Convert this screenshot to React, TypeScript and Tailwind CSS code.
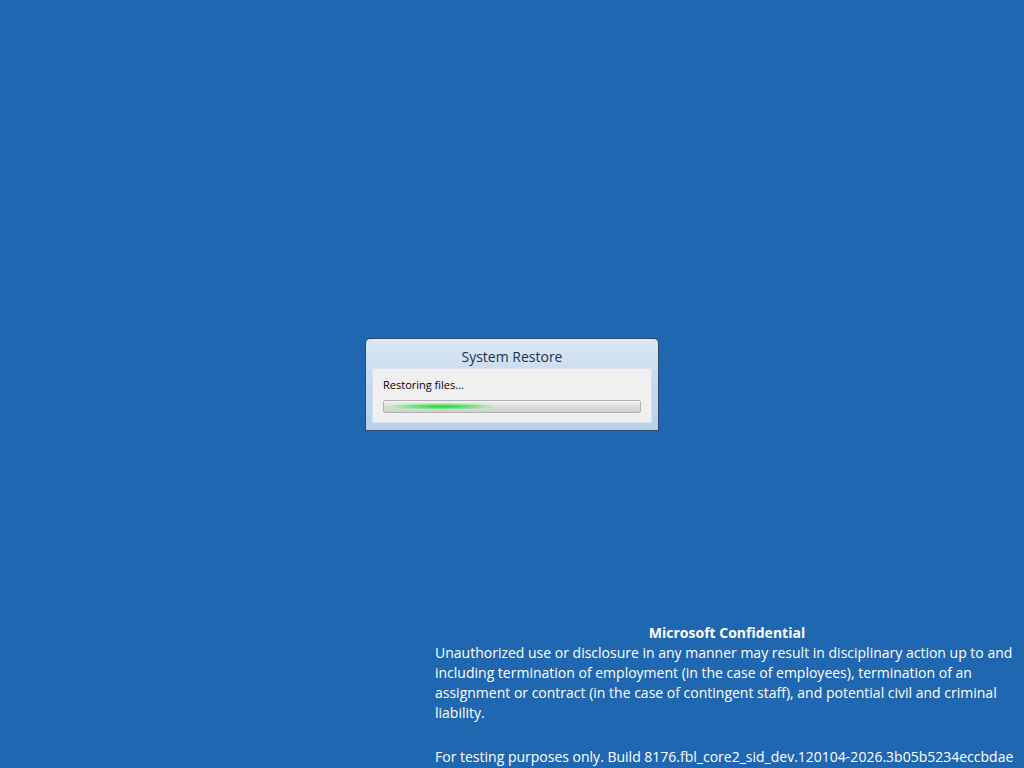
export default function App() {
  return (
    <div
      className="flex h-[768px] w-[1024px] flex-col overflow-hidden bg-[#1f67b0] pt-[338px]"
      style={{ fontFamily: '"Segoe UI", "Open Sans", "Noto Sans", sans-serif' }}
    >
      {/* dialog */}
      <div className="flex w-[294px] flex-col self-center rounded-t-[5px] border border-[#34496a] bg-gradient-to-b from-[#dbe8f5] via-[#c4d8ee] to-[#b9d1ea] px-[6px] pb-[7px]">
        <div className="flex h-[29px] items-center justify-center pt-[5px] text-[14px] text-[#1e3150]">
          System Restore
        </div>
        <div className="flex h-[55px] flex-col gap-[8px] border border-[#d6e2ef] bg-[#f0f0f0] px-[10px] pt-[9px]">
          <div className="text-[11px] leading-[14px] text-black">Restoring files...</div>
          <div className="flex h-[13px] items-center overflow-hidden rounded-[2px] border border-[#b2b2b2] bg-gradient-to-b from-[#f3f3f3] via-[#dcdcdc] to-[#d0d0d0] px-[2px]">
            <div className="h-[7px] w-[112px] rounded-full bg-[radial-gradient(ellipse_at_center,#22d63a_0%,#6fe07a_35%,rgba(200,240,200,0.4)_70%,transparent_100%)]" />
          </div>
        </div>
      </div>

      {/* confidential notice */}
      <div className="ml-[435px] mt-[192px] w-[584px] text-[14px] leading-[20px] text-white">
        <div className="text-center font-bold">Microsoft Confidential</div>
        <p>
          Unauthorized use or disclosure in any manner may result in disciplinary action up to and including
          termination of employment (in the case of employees), termination of an assignment or contract (in the
          case of contingent staff), and potential civil and criminal liability.
        </p>
        <p className="mt-[24px]">For testing purposes only. Build 8176.fbl_core2_sid_dev.120104-2026.3b05b5234eccbdae</p>
      </div>
    </div>
  );
}
